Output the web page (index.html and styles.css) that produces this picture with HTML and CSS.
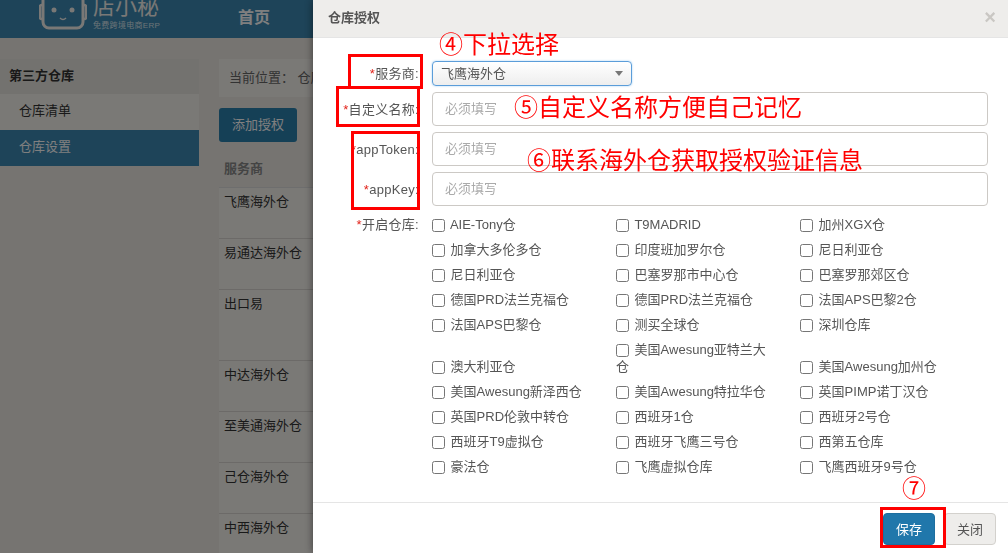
FILE: index.html
```html
<!DOCTYPE html>
<html lang="zh-CN">
<head>
<meta charset="utf-8">
<title>仓库授权</title>
<link rel="stylesheet" href="styles.css">
</head>
<body>
<div class="page">
  <header class="topbar">
    <div class="logo">
      <svg class="robot" width="48" height="30" viewBox="0 0 48 30">
        <rect x="4" y="-8" width="40" height="36" rx="6" fill="none" stroke="#f2f0ec" stroke-width="3"/>
        <path d="M4 5H2.500Q1 5 1 7V17Q1 19 2.500 19H4M44 5H45.500Q47 5 47 7V17Q47 19 45.500 19H44" fill="none" stroke="#f2f0ec" stroke-width="2.500"/>
        <circle cx="15" cy="10" r="2.500" fill="#f2f0ec"/>
        <circle cx="33" cy="10" r="2.500" fill="#f2f0ec"/>
        <path d="M21 18Q24 21 27 18" fill="none" stroke="#f2f0ec" stroke-width="1.500"/>
      </svg>
      <div class="logo-text">
        <div class="logo-name">店小秘</div>
        <div class="logo-sub">免费跨境电商ERP</div>
      </div>
    </div>
    <nav class="nav-item">首页</nav>
  </header>
  <div class="main">
    <aside class="sidebar">
      <div class="side-title">第三方仓库</div>
      <div class="side-item">仓库清单</div>
      <div class="side-item active">仓库设置</div>
    </aside>
    <section class="content">
      <div class="crumb">当前位置： 仓库设置</div>
      <button class="add-btn">添加授权</button>
      <div class="table">
        <div class="th">服务商</div>
        <div class="td">飞鹰海外仓</div>
        <div class="td">易通达海外仓</div>
        <div class="td tall">出口易</div>
        <div class="td">中达海外仓</div>
        <div class="td">至美通海外仓</div>
        <div class="td">己仓海外仓</div>
        <div class="td">中西海外仓</div>
      </div>
    </section>
  </div>
</div>
<div class="overlay"></div>
<div class="modal">
  <div class="modal-head">
    <span class="modal-title">仓库授权</span>
    <span class="modal-close">×</span>
  </div>
  <div class="modal-body">
    <div class="form-row">
      <label class="form-label"><i>*</i>服务商:</label>
      <div class="select-wrap">
        <select class="select"><option>飞鹰海外仓</option></select>
      </div>
    </div>
    <div class="form-row">
      <label class="form-label"><i>*</i>自定义名称:</label>
      <input class="input" placeholder="必须填写">
    </div>
    <div class="form-row">
      <label class="form-label"><i>*</i>appToken:</label>
      <input class="input" placeholder="必须填写">
    </div>
    <div class="form-row">
      <label class="form-label"><i>*</i>appKey:</label>
      <input class="input" placeholder="必须填写">
    </div>
    <div class="form-row checks-row">
      <label class="form-label check-label"><i>*</i>开启仓库:</label>
      <div class="checks">
        <label class="check"><input type="checkbox"> AIE-Tony仓</label>
        <label class="check"><input type="checkbox"> T9MADRID</label>
        <label class="check"><input type="checkbox"> 加州XGX仓</label>
        <label class="check"><input type="checkbox"> 加拿大多伦多仓</label>
        <label class="check"><input type="checkbox"> 印度班加罗尔仓</label>
        <label class="check"><input type="checkbox"> 尼日利亚仓</label>
        <label class="check"><input type="checkbox"> 尼日利亚仓</label>
        <label class="check"><input type="checkbox"> 巴塞罗那市中心仓</label>
        <label class="check"><input type="checkbox"> 巴塞罗那郊区仓</label>
        <label class="check"><input type="checkbox"> 德国PRD法兰克福仓</label>
        <label class="check"><input type="checkbox"> 德国PRD法兰克福仓</label>
        <label class="check"><input type="checkbox"> 法国APS巴黎2仓</label>
        <label class="check"><input type="checkbox"> 法国APS巴黎仓</label>
        <label class="check"><input type="checkbox"> 测买全球仓</label>
        <label class="check"><input type="checkbox"> 深圳仓库</label>
        <label class="check"><input type="checkbox"> 澳大利亚仓</label>
        <label class="check"><input type="checkbox"> 美国Awesung亚特兰大仓</label>
        <label class="check"><input type="checkbox"> 美国Awesung加州仓</label>
        <label class="check"><input type="checkbox"> 美国Awesung新泽西仓</label>
        <label class="check"><input type="checkbox"> 美国Awesung特拉华仓</label>
        <label class="check"><input type="checkbox"> 英国PIMP诺丁汉仓</label>
        <label class="check"><input type="checkbox"> 英国PRD伦敦中转仓</label>
        <label class="check"><input type="checkbox"> 西班牙1仓</label>
        <label class="check"><input type="checkbox"> 西班牙2号仓</label>
        <label class="check"><input type="checkbox"> 西班牙T9虚拟仓</label>
        <label class="check"><input type="checkbox"> 西班牙飞鹰三号仓</label>
        <label class="check"><input type="checkbox"> 西第五仓库</label>
        <label class="check"><input type="checkbox"> 豪法仓</label>
        <label class="check"><input type="checkbox"> 飞鹰虚拟仓库</label>
        <label class="check"><input type="checkbox"> 飞鹰西班牙9号仓</label>
      </div>
    </div>
  </div>
  <div class="modal-foot">
    <button class="btn btn-save">保存</button>
    <button class="btn btn-close">关闭</button>
  </div>
</div>
<div class="note note-4">④下拉选择</div>
<div class="note note-5">⑤自定义名称方便自己记忆</div>
<div class="note note-6">⑥联系海外仓获取授权验证信息</div>
<div class="note note-7">⑦</div>
<div class="mark mark-a"></div>
<div class="mark mark-b"></div>
<div class="mark mark-c"></div>
<div class="mark mark-d"></div>
</body>
</html>
```
FILE: styles.css
```css
* { box-sizing: border-box; }
html, body { margin: 0; height: 100%; overflow: hidden; }
body {
  font: 13px/17px "Liberation Sans", "Noto Sans CJK SC", sans-serif;
  color: #555;
  background: #ede9e3;
}
.page { height: 553px; overflow: hidden; }

/* page behind the dialog */
.topbar {
  height: 38px;
  background: #3c88b2;
  display: flex;
  align-items: flex-start;
  overflow: hidden;
  color: #fff;
}
.logo { display: flex; margin-left: 39px; width: 199px; height: 38px; }
.robot { flex: none; }
.logo-text { margin-left: 6px; margin-top: -6px; }
.logo-name { font-size: 22px; line-height: 26px; color: #f2f0ec; }
.logo-sub { font-size: 8px; line-height: 10px; margin-top: 1px; letter-spacing: .3px; color: #d8e6ee; white-space: nowrap; }
.nav-item { font-size: 16px; font-weight: bold; line-height: 36px; }
.main { display: flex; }
.sidebar { width: 199px; margin-top: 21px; flex: none; }
.side-title {
  height: 35px;
  line-height: 33px;
  padding-left: 9px;
  font-weight: bold;
  color: #333;
  background: #e7e4de;
}
.side-item {
  height: 36px;
  line-height: 34px;
  padding-left: 19px;
  color: #333;
  background: #f5f2ed;
}
.side-item.active { background: #3c88b2; color: #fff; }
.content { width: 400px; margin-left: 20px; margin-top: 21px; }
.crumb {
  height: 38px;
  line-height: 38px;
  padding-left: 10px;
  background: #f5f2ed;
  white-space: nowrap;
  color: #666;
}
.add-btn {
  display: block;
  width: 78px;
  height: 34px;
  margin-top: 11px;
  padding: 0 0 2px;
  border: 0;
  border-radius: 3px;
  background: #2a80ad;
  color: #fff;
  font: inherit;
}
.table { margin-top: 10px; background: #f5f2ed; }
.th {
  height: 36px;
  line-height: 34px;
  padding-left: 5px;
  font-weight: bold;
  color: #888;
  background: #ecE9e3;
  border-bottom: 1px solid #ddd;
}
.td {
  height: 51px;
  padding: 4px 5px;
  line-height: 19px;
  color: #333;
  border-bottom: 1px solid #d8d5d0;
}
.td.tall { height: 71px; }

/* dialog */
.overlay { position: fixed; inset: 0; background: rgba(0, 0, 0, .5); }
.modal {
  position: fixed;
  left: 313px;
  top: 0;
  right: 0;
  bottom: 0;
  background: #fff;
  display: flex;
  flex-direction: column;
  box-shadow: 0 0 8px rgba(0, 0, 0, .5);
}
.modal-head {
  height: 38px;
  flex: none;
  background: #eeedeb;
  border-bottom: 1px solid #e5e5e5;
  display: flex;
  justify-content: space-between;
  align-items: center;
  padding: 0 12px 2px 15px;
}
.modal-title { font-weight: bold; color: #555; }
.modal-close { font-size: 20px; font-weight: bold; color: #c9c7c3; }
.modal-body {
  flex: 1;
  padding: 23px 20px 0 0;
  display: flex;
  flex-direction: column;
  gap: 6px;
}
.form-row { display: flex; align-items: center; }
.form-label {
  width: 106px;
  margin-right: 13px;
  flex: none;
  text-align: right;
  color: #555;
  white-space: nowrap;
  letter-spacing: .3px;
  line-height: 15px;
}
.form-label i { color: #e2231a; font-style: normal; }
.select-wrap { position: relative; width: 200px; height: 25px; }
.select-wrap::after {
  content: "";
  position: absolute;
  right: 9px;
  top: 10px;
  border: 4px solid transparent;
  border-top: 5px solid #777;
  border-bottom: 0;
}
.select {
  appearance: none;
  width: 100%;
  height: 100%;
  padding-left: 8px;
  font: inherit;
  color: #555;
  background: linear-gradient(#fff, #eee);
  border: 1px solid #5b9dd9;
  border-radius: 4px;
  box-shadow: 0 0 2px rgba(82, 168, 236, .6);
  outline: 0;
}
.input {
  flex: 1;
  height: 34px;
  padding: 0 12px 2px;
  font: inherit;
  border: 1px solid #ccc9c5;
  border-radius: 4px;
  outline: 0;
}
.input::placeholder { color: #aaa; opacity: 1; }
.checks-row { align-items: flex-start; }
.check-label { padding-top: 5px; }
.checks {
  display: grid;
  grid-template-columns: repeat(3, 184px);
  align-items: end;
}
.check {
  padding: 4px 26px 4px 0;
  line-height: 17px;
  color: #555;
}
.check input {
  width: 13px;
  height: 13px;
  margin: 0 2px 0 0;
  vertical-align: -3px;
}
.modal-foot {
  height: 51px;
  flex: none;
  border-top: 1px solid #e5e5e5;
  padding: 10px 12px 0 0;
  display: flex;
  justify-content: flex-end;
  gap: 9px;
}
.btn {
  width: 52px;
  height: 32px;
  border-radius: 4px;
  font: inherit;
  padding: 0;
}
.btn-save { background: #2077ab; border: 1px solid #1d6e9f; color: #fff; }
.btn-close { background: #eeedeb; border: 1px solid #d3d1cd; color: #555; }

/* annotations drawn on top of the screenshot */
.note {
  position: fixed;
  font-size: 24px;
  line-height: 28px;
  color: #ff0000;
  white-space: nowrap;
}
.note-4 { left: 439px; top: 31px; }
.note-5 { left: 514px; top: 94px; }
.note-6 { left: 527px; top: 147px; }
.note-7 { left: 902px; top: 475px; }
.mark { position: fixed; border: 3px solid #ff0000; }
.mark-a { left: 348px; top: 54px; width: 75px; height: 35px; }
.mark-b { left: 336px; top: 86px; width: 84px; height: 41px; }
.mark-c { left: 351px; top: 131px; width: 69px; height: 79px; }
.mark-d { left: 880px; top: 507px; width: 66px; height: 41px; }
```
